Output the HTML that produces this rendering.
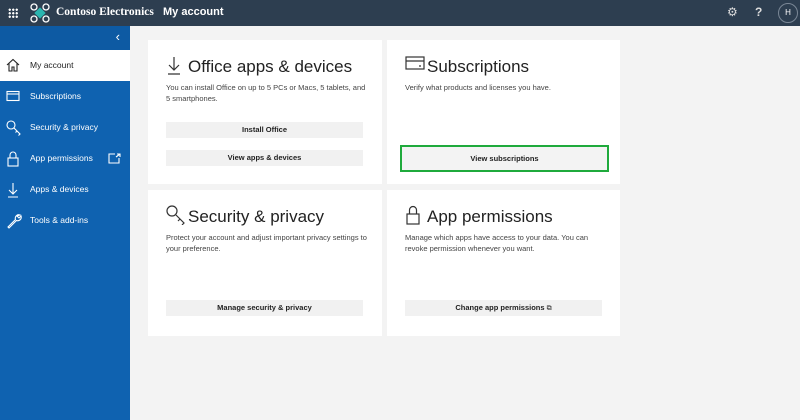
<!DOCTYPE html><html><head><style>
*{margin:0;padding:0;box-sizing:border-box}
body{width:800px;height:420px;background:#f3f3f3;font-family:"Liberation Sans",sans-serif;position:relative;overflow:hidden}
.top{position:absolute;left:0;top:0;width:800px;height:26px;background:#2d3e50;color:#fff}
.side{position:absolute;left:0;top:26px;width:130px;height:394px;background:#0f62b0}
.back{height:24px;background:#0d5aa3;color:#fff;text-align:right;padding-right:10px;font-size:13px;line-height:22px}
.it{height:31px;color:#fff;font-size:8.5px;line-height:31px;padding-left:30px;position:relative}
.it.sel{background:#fff;color:#222}
.it svg{position:absolute;left:6px;top:8px}
.card{position:absolute;background:#fff}
.card h2{font-weight:normal;font-size:17px;color:#222;position:absolute;left:40px;top:17px}
.card p{position:absolute;left:18px;top:42px;font-size:7.5px;line-height:11px;color:#444;width:205px}
.card svg.ic{position:absolute;left:18px;top:15px}
.btn{position:absolute;left:18px;width:197px;height:16px;background:#f1f1f1;font-size:7.5px;color:#222;text-align:center;line-height:16px;font-weight:bold}
</style></head><body>
<div class="top">
<div style="position:absolute;left:8px;top:8px;width:10px;height:10px;background:radial-gradient(circle,#fff 1px,transparent 1.3px) 0 0/3.5px 3.5px"></div>
<svg style="position:absolute;left:30px;top:3px" width="20" height="20" viewBox="0 0 20 20"><rect x="6" y="6" width="8" height="8" fill="#2bb5b0" transform="rotate(45 10 10)"/><g fill="none" stroke="#fff" stroke-width="1.3"><circle cx="4" cy="4" r="3"/><circle cx="16" cy="4" r="3"/><circle cx="4" cy="16" r="3"/><circle cx="16" cy="16" r="3"/></g></svg>
<div style="position:absolute;left:56px;top:6px;font-family:'Liberation Serif',serif;font-weight:bold;font-size:11.5px">Contoso Electronics</div>
<div style="position:absolute;left:163px;top:6px;font-size:11px;font-weight:bold">My account</div>
<div style="position:absolute;left:727px;top:5px;font-size:12px;color:#ddd">⚙</div>
<div style="position:absolute;left:755px;top:5px;font-size:12px;color:#ddd;font-weight:bold">?</div>
<div style="position:absolute;left:778px;top:3px;width:20px;height:20px;border:1px solid #7a8796;border-radius:50%;font-size:8px;text-align:center;line-height:18px">H</div>
</div>
<div class="side">
<div class="back">‹</div>
<div class="it sel"><svg width="14" height="14" viewBox="0 0 14 14" fill="none" stroke="#222" stroke-width="1.1"><path d="M1 7L7 1.5 13 7M3 5.5V13h3V9h2v4h3V5.5"/></svg>My account</div>
<div class="it"><svg width="14" height="14" viewBox="0 0 14 14" fill="none" stroke="#fff" stroke-width="1.1"><rect x="1" y="2.5" width="12" height="9"/><path d="M1 5h12"/></svg>Subscriptions</div>
<div class="it"><svg width="16" height="16" viewBox="0 0 16 16" fill="none" stroke="#fff" stroke-width="1.1"><circle cx="5" cy="5" r="4"/><path d="M8 8l6 6-1.5 1.5M11 11l-1.5 1.5"/></svg>Security &amp; privacy</div>
<div class="it"><svg width="14" height="16" viewBox="0 0 14 16" fill="none" stroke="#fff" stroke-width="1.1"><rect x="2" y="7" width="10" height="8"/><path d="M4 7V4a3 3 0 016 0v3"/></svg>App permissions<svg style="left:108px;top:10px" width="13" height="11" viewBox="0 0 13 11" fill="none" stroke="#fff" stroke-width="1.1"><path d="M7 1H1v9h10V5M8 4l4-3M9 1h3v3"/></svg></div>
<div class="it"><svg width="14" height="16" viewBox="0 0 14 16" fill="none" stroke="#fff" stroke-width="1.1"><path d="M7 1v11M3 8l4 4 4-4M2 15h10"/></svg>Apps &amp; devices</div>
<div class="it"><svg width="16" height="16" viewBox="0 0 16 16" fill="none" stroke="#fff" stroke-width="1.1"><path d="M14 2a3.5 3.5 0 00-4.5 4.5L2 14l1 1 7.5-7.5A3.5 3.5 0 0015 3l-2 2-2-2z"/></svg>Tools &amp; add-ins</div>
</div>

<div class="card" style="left:148px;top:40px;width:234px;height:144px">
<svg class="ic" width="16" height="20" viewBox="0 0 16 20" fill="none" stroke="#333" stroke-width="1.2"><path d="M8 2v13M3 10l5 5 5-5M2 19h12"/></svg>
<h2>Office apps &amp; devices</h2>
<p>You can install Office on up to 5 PCs or Macs, 5 tablets, and 5 smartphones.</p>
<div class="btn" style="top:82px">Install Office</div>
<div class="btn" style="top:110px">View apps &amp; devices</div>
</div>
<div class="card" style="left:387px;top:40px;width:233px;height:144px">
<svg class="ic" width="20" height="16" viewBox="0 0 20 16" fill="none" stroke="#333" stroke-width="1.2"><rect x="1" y="2" width="18" height="12"/><path d="M1 6h18M14 11h2"/></svg>
<h2>Subscriptions</h2>
<p>Verify what products and licenses you have.</p>
<div class="btn" style="top:105px;left:13px;width:209px;height:27px;line-height:23px;border:2.5px solid #1faa3c;background:#f3f3f3">View subscriptions</div>
</div>
<div class="card" style="left:148px;top:190px;width:234px;height:146px">
<svg class="ic" width="20" height="20" viewBox="0 0 20 20" fill="none" stroke="#333" stroke-width="1.2"><circle cx="6" cy="6" r="5"/><path d="M10 10l8 8-2 2M14 14l-2 2"/></svg>
<h2>Security &amp; privacy</h2>
<p>Protect your account and adjust important privacy settings to your preference.</p>
<div class="btn" style="top:110px">Manage security &amp; privacy</div>
</div>
<div class="card" style="left:387px;top:190px;width:233px;height:146px">
<svg class="ic" width="16" height="20" viewBox="0 0 16 20" fill="none" stroke="#333" stroke-width="1.2"><rect x="2" y="9" width="12" height="10"/><path d="M4.5 9V5a3.5 3.5 0 017 0v4"/></svg>
<h2>App permissions</h2>
<p>Manage which apps have access to your data. You can revoke permission whenever you want.</p>
<div class="btn" style="top:110px">Change app permissions <span style="font-weight:normal;font-size:7px">⧉</span></div>
</div>
</body></html>
